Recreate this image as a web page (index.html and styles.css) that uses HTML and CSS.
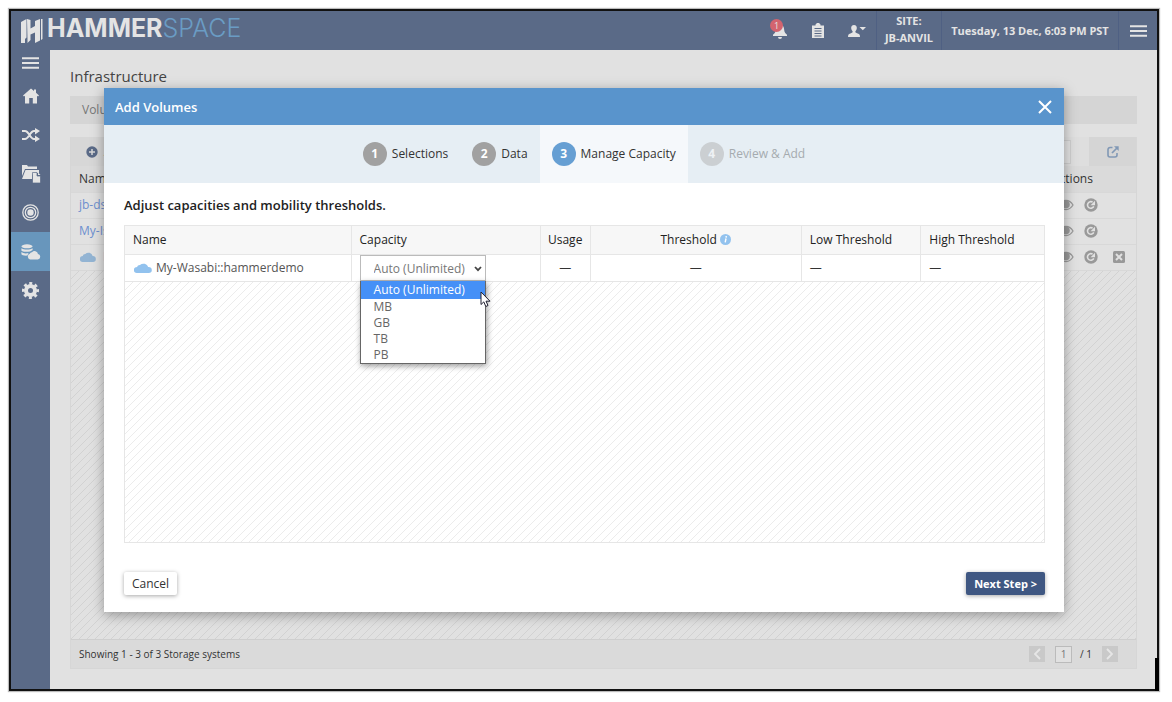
FILE: index.html
```html
<!DOCTYPE html>
<html lang="en">
<head>
<meta charset="utf-8">
<title>Hammerspace - Add Volumes</title>
<link rel="stylesheet" href="styles.css">
</head>
<body>
<svg class="defs" aria-hidden="true">
  <symbol id="cloud" viewBox="0 0 16 10"><path d="M3 10a3 3 0 0 1-.3-6A2.6 2.6 0 0 1 5.300 2 4.300 4.300 0 0 1 12.600 4 3 3 0 0 1 13 10z"/></symbol>
  <symbol id="eye" viewBox="0 0 16 12"><path d="M1 6C4.500 0 11.500 0 15 6C11.500 12 4.500 12 1 6z" fill="none" stroke="currentColor" stroke-width="1.300"/><circle cx="8" cy="5.500" r="3.800"/></symbol>
  <symbol id="refresh" viewBox="0 0 14 14"><circle cx="7" cy="7" r="6.700"/><path d="M9.800 8.400A3.300 3.300 0 1 1 8.600 4.200" fill="none" stroke="#e1e1e1" stroke-width="1.600"/><path d="M11 2.800v4.400H6.600z" fill="#e1e1e1"/></symbol>
  <symbol id="menu" viewBox="0 0 17 12"><path d="M0 1.200h17M0 6h17M0 10.800h17" stroke="currentColor" stroke-width="2"/></symbol>
</svg>
<div class="frame">
  <header class="topbar">
    <a class="brand" href="#">
      <svg class="brand-mark" viewBox="0 0 22 26" aria-hidden="true"><path d="M0 4L5.500 1v18.500L4 21v4H0zM6 1l3.500 1v8.500L14 8V3l5-2v21.500l-5 2.500V14.500l-4.500 2V22L6.500 25v-4zM20 1h1.500v20L20 22z"/></svg>
      <span class="brand-strong">HAMMER</span><span class="brand-light">SPACE</span>
    </a>
    <div class="tools">
      <button class="tool bell" aria-label="Notifications">
        <svg width="16" height="16" viewBox="0 0 16 16"><path d="M8 1.500C11 1.500 12 4 12.200 7c.1 2 1.300 3.500 2.800 4.800V13H1v-1.200C2.500 10.500 3.700 9 3.800 7 4 4 5 1.500 8 1.500zM6 14h4a2 2 0 0 1-4 0z"/></svg>
        <span class="badge">1</span>
      </button>
      <button class="tool" aria-label="Tasks">
        <svg width="14" height="16" viewBox="0 0 14 16"><path d="M1 2.500h3.500V1.500L6 0h2l1.500 1.500v1H13V15H1z"/><path d="M3.500 5.500h7M3.500 8h7M3.500 10.500h7M3.500 13h7" stroke="#5a6a87"/></svg>
      </button>
      <button class="tool" aria-label="Account">
        <svg width="18" height="14" viewBox="0 0 18 14"><path d="M6 1c2 0 3 1.400 2.800 3.300C8.700 5.800 8 6.600 7.400 7.300c-.2 1 .2 1.500 1.600 2 2 .6 3 1 3 3.700H0c0-2.700 1-3.100 3-3.700 1.400-.5 1.800-1 1.600-2C4 6.600 3.300 5.800 3.200 4.300 3 2.400 4 1 6 1zM11.500 3H18l-3.200 3.300z"/></svg>
      </button>
    </div>
    <div class="site">SITE:<br>JB-ANVIL</div>
    <div class="clock">Tuesday, 13 Dec, 6:03 PM PST</div>
    <button class="top-menu" aria-label="Menu"><svg width="17" height="12"><use href="#menu"/></svg></button>
  </header>
  <div class="body">
    <nav class="sidebar">
      <button class="nav-toggle" aria-label="Toggle navigation"><svg width="17" height="12"><use href="#menu"/></svg></button>
      <a class="nav-item" href="#" aria-label="Home"><svg width="16" height="16" viewBox="0 0 16 16"><path d="M8 .5l3 2.500V1.500h2V4.800L16 7.500l-1 1-1-.8V15.500h-4.200V10H6.200v5.500H2V7.700l-1 .8-1-1z"/></svg></a>
      <a class="nav-item" href="#" aria-label="Mobility"><svg width="18" height="14" viewBox="0 0 18 14"><path d="M0 3h3c4 0 5 8 9 8h2M0 11h3c4 0 5-8 9-8h2" fill="none" stroke="currentColor" stroke-width="2"/><path d="M13 0l5 3-5 3.400zM13 7.600l5 3.400-5 3z"/></svg></a>
      <a class="nav-item" href="#" aria-label="Files"><svg width="20" height="20" viewBox="0 0 20 20"><path d="M1 1h5l1 1.500h9V5H4L1 12z"/><path d="M4.500 6H18v3h-5l-2 2v4H1z"/><path d="M11.500 8.500H16V12h3.500v7h-8z" stroke="#5a6a87" stroke-width=".7"/><path d="M17 8.500l2.500 2.500H17z"/></svg></a>
      <a class="nav-item" href="#" aria-label="Objectives"><svg width="17" height="17" viewBox="0 0 17 17"><g fill="none" stroke="currentColor" stroke-width="1.300"><circle cx="8.500" cy="8.500" r="7.700"/><circle cx="8.500" cy="8.500" r="5.200"/></g><circle cx="8.500" cy="8.500" r="3.200"/></svg></a>
      <a class="nav-item nav-active" href="#" aria-label="Infrastructure"><svg width="20" height="16" viewBox="0 0 20 16"><ellipse cx="6" cy="2.300" rx="5.600" ry="2"/><path d="M.4 4.200c2 1.800 9.200 1.800 11.200 0V6L9 7.400C5 8.200 1 7.600.4 6.400zM.4 8.100C2 9.500 5 9.700 7.500 9.100L6.500 11.600C3 11.800.8 11.200.4 10.300z"/><path d="M9 15.500a3 3 0 0 1-.2-5.700A2.200 2.200 0 0 1 11 8.200 3.500 3.500 0 0 1 17 10 2.800 2.800 0 0 1 17 15.500z"/></svg></a>
      <a class="nav-item" href="#" aria-label="Settings"><svg width="17" height="17" viewBox="0 0 17 17"><circle cx="8.500" cy="8.500" r="4.500" fill="none" stroke="currentColor" stroke-width="4"/><circle cx="8.500" cy="8.500" r="7.200" fill="none" stroke="currentColor" stroke-width="2.600" stroke-dasharray="3 2.655" stroke-dashoffset="1.500"/></svg></a>
    </nav>
    <main class="content">
      <h1 class="page-title">Infrastructure</h1>
      <div class="tabs">Volu</div>
      <section class="panel">
        <div class="toolbar">
          <button class="add"><svg width="12" height="12" viewBox="0 0 12 12"><circle cx="6" cy="6" r="5.700"/><path d="M6 3v6M3 6h6" stroke="#d7d7d7" stroke-width="1.500"/></svg>Add</button>
          <input class="search" type="text" aria-label="Search">
          <button class="export" aria-label="Export"><svg width="12" height="12" viewBox="0 0 12 12"><path d="M5.500 1.500H3a2 2 0 0 0-2 2V9a2 2 0 0 0 2 2h5a2 2 0 0 0 2-2V7" fill="none" stroke="currentColor" stroke-width="1.600"/><path d="M5 7l5-5" stroke="currentColor" stroke-width="1.700"/><path d="M7 .3h4.700V5z"/></svg></button>
        </div>
        <table class="systems">
          <thead><tr><th>Name</th><th class="actions-col">Actions</th></tr></thead>
          <tbody>
            <tr><td><a href="#">jb-ds</a></td><td><div class="actions"><svg width="16" height="12"><use href="#eye"/></svg><svg width="14" height="14"><use href="#refresh"/></svg></div></td></tr>
            <tr><td><a href="#">My-Is</a></td><td><div class="actions"><svg width="16" height="12"><use href="#eye"/></svg><svg width="14" height="14"><use href="#refresh"/></svg></div></td></tr>
            <tr><td><a class="cloud-link" href="#"><svg width="16" height="10"><use href="#cloud"/></svg>My</a></td><td><div class="actions"><svg width="16" height="12"><use href="#eye"/></svg><svg width="14" height="14"><use href="#refresh"/></svg><svg class="remove" width="12" height="12" viewBox="0 0 12 12"><rect width="12" height="12" rx="1.500"/><path d="M3 3l6 6M9 3L3 9" stroke="#e1e1e1" stroke-width="2"/></svg></div></td></tr>
          </tbody>
        </table>
        <div class="panel-empty"></div>
        <footer class="pager">
          <span class="showing">Showing 1 - 3 of 3 Storage systems</span>
          <button class="page-btn" aria-label="Previous page"><svg width="8" height="12" viewBox="0 0 8 12"><path d="M7 1L2 6l5 5" fill="none" stroke="currentColor" stroke-width="1.800"/></svg></button>
          <input class="page-no" type="text" value="1" aria-label="Page">
          <span class="page-total">/ 1</span>
          <button class="page-btn" aria-label="Next page"><svg width="8" height="12" viewBox="0 0 8 12"><path d="M1 1l5 5-5 5" fill="none" stroke="currentColor" stroke-width="1.800"/></svg></button>
        </footer>
      </section>
    </main>
  </div>
  <div class="overlay">
    <section class="dialog" role="dialog" aria-labelledby="dialog-title">
      <header class="dialog-head">
        <h2 id="dialog-title">Add Volumes</h2>
        <button class="close" aria-label="Close"><svg width="14" height="14" viewBox="0 0 14 14"><path d="M1 1l12 12M13 1L1 13" stroke="currentColor" stroke-width="2"/></svg></button>
      </header>
      <ol class="steps">
        <li class="step"><span class="num">1</span>Selections</li>
        <li class="step"><span class="num">2</span>Data</li>
        <li class="step current"><span class="num">3</span>Manage Capacity</li>
        <li class="step pending"><span class="num">4</span>Review &amp; Add</li>
      </ol>
      <div class="dialog-body">
        <h3 class="lead">Adjust capacities and mobility thresholds.</h3>
        <div class="grid">
          <table class="volumes">
            <colgroup><col class="c-name"><col class="c-capacity"><col class="c-usage"><col class="c-threshold"><col class="c-low"><col class="c-high"></colgroup>
            <thead><tr><th>Name</th><th>Capacity</th><th class="mid">Usage</th><th class="mid">Threshold <svg class="info" width="11" height="11" viewBox="0 0 11 11"><circle cx="5.500" cy="5.500" r="5.500" fill="#92c2ee"/><path d="M6 4.500L5.200 8.300" stroke="#fff" stroke-width="1.400"/><circle cx="6.200" cy="2.800" r=".9" fill="#fff"/></svg></th><th>Low Threshold</th><th>High Threshold</th></tr></thead>
            <tbody><tr>
              <td><span class="volume"><svg width="18" height="10" viewBox="0 0 16 10" preserveAspectRatio="none"><use href="#cloud"/></svg>My-Wasabi::hammerdemo</span></td>
              <td>
                <div class="picker">
                  <select class="unit" aria-label="Capacity"><option>Auto (Unlimited)</option></select>
                  <svg class="caret" width="8" height="6" viewBox="0 0 8 6"><path d="M1 1l3 3.200L7 1" fill="none" stroke="#444" stroke-width="1.800"/></svg>
                  <ul class="options" role="listbox">
                    <li class="selected" role="option">Auto (Unlimited)</li><li role="option">MB</li><li role="option">GB</li><li role="option">TB</li><li role="option">PB</li>
                  </ul>
                  <svg class="pointer" width="11" height="17" viewBox="0 0 11 17"><path d="M1 1v12.500l2.800-2.600 2 4.600 2.200-1-2-4.300H10z" fill="#fff" stroke="#223" stroke-width="1"/></svg>
                </div>
              </td>
              <td class="mid">—</td><td class="mid">—</td><td>—</td><td>—</td>
            </tr></tbody>
          </table>
          <div class="grid-empty"></div>
        </div>
        <div class="buttons">
          <button class="btn">Cancel</button>
          <button class="btn primary">Next Step &gt;</button>
        </div>
      </div>
    </section>
  </div>
</div>
</body>
</html>
```
FILE: styles.css
```css
* { box-sizing: border-box; }
body { margin: 0; background: #fff; color: #333; font: 12px/16px "Open Sans", sans-serif; }
button { border: 0; padding: 0; background: none; color: inherit; font: inherit; }
input, select { font: inherit; }
a { color: inherit; text-decoration: none; }
h1, h2, h3, ul, ol { margin: 0; padding: 0; font-weight: 400; list-style: none; }
svg { display: block; fill: currentColor; flex: none; }
table { width: 100%; border-collapse: collapse; table-layout: fixed; }
th { font-weight: 500; text-align: left; }
.defs { position: absolute; width: 0; height: 0; }

.frame { position: relative; display: flex; flex-direction: column; min-height: calc(100vh - 20px); margin: 9px 13px 11px 9px; border: 2px solid #111; box-shadow: 0 0 1px 1px #bbb; background: #e1e1e1; }
.frame::after { content: ""; position: absolute; right: -2px; bottom: -2px; width: 4px; height: 33px; background: #000; }

.topbar { display: flex; align-items: stretch; height: 39px; background: #5a6a87; color: #e4e4e4; font-weight: 700; font-size: 11px; }
.brand { display: flex; align-items: center; padding: 0 0 5px 10px; font: 25px/34px Inter, sans-serif; }
.brand-mark { width: 22px; height: 26px; margin: 5px 4px 0 0; }
.brand-strong { font-weight: 700; }
.brand-light { font-weight: 300; color: #6a9cc4; }
.tools { display: flex; align-items: center; gap: 23px; margin-left: auto; padding-right: 10px; }
.tool { position: relative; }
.badge { position: absolute; left: -2px; top: -4px; width: 13px; height: 13px; border-radius: 50%; background: #d3646f; font-size: 9px; line-height: 13px; text-align: center; font-weight: 400; }
.site, .clock, .top-menu { display: flex; align-items: center; justify-content: center; border-left: 1px solid #4f6083; }
.site { width: 65px; padding-bottom: 4px; line-height: 17px; text-align: center; }
.clock { width: 177px; }
.top-menu { width: 39px; }

.body { flex: 1; display: flex; }
.sidebar { flex: none; width: 39px; background: #5a6a87; color: #e4e4e4; }
.nav-toggle { display: flex; align-items: center; justify-content: center; width: 100%; height: 26px; }
.nav-item { display: flex; align-items: center; justify-content: center; height: 39px; }
.nav-active { background: #6896bc; }

.content { flex: 1; display: flex; flex-direction: column; padding: 16px 20px 20px; }
.page-title { font-size: 15px; line-height: 20px; font-weight: 500; color: #444; }
.tabs { margin-top: 10px; padding: 6px 12px; background: #d5d5d5; color: #777; }
.panel { flex: 1; display: flex; flex-direction: column; margin-top: 13px; border: 1px solid #d6d6d6; border-top: 0; }
.toolbar { display: flex; align-items: center; height: 29px; background: #dedede; }
.add { display: flex; align-items: center; gap: 6px; align-self: stretch; padding: 0 15px; background: #d7d7d7; }
.add svg { color: #5a6a87; }
.search { width: 180px; height: 24px; margin: 0 18px 0 auto; border: 1px solid #cfcfcf; background: #e2e2e2; }
.export { display: flex; align-items: center; justify-content: center; align-self: stretch; width: 47px; background: #d5d5d5; color: #8198b5; }
.systems th { height: 26px; padding: 0 8px; background: #dadada; }
.systems td { height: 26px; padding: 0 8px; border-top: 1px solid #d8d8d8; color: #6d8fcf; }
.systems .actions-col { width: 93px; padding-left: 9px; }
.actions { display: flex; align-items: center; gap: 10px; padding-left: 7px; color: #999; }
.remove { margin-left: 5px; }
.cloud-link { display: flex; align-items: center; gap: 7px; padding-left: 1px; }
.cloud-link svg { color: #93b4d3; }
.panel-empty, .grid-empty { flex: 1; background-size: 8px 8px; }
.panel-empty { border-top: 1px solid #d8d8d8; background-image: linear-gradient(135deg, transparent 45%, #d2d2d2 45%, #d2d2d2 55%, transparent 55%); }
.pager { display: flex; align-items: center; height: 29px; padding: 0 18px 0 8px; border-top: 1px solid #cfcfcf; background: #dadada; font-size: 10px; }
.showing { margin-right: auto; }
.page-btn { display: flex; align-items: center; justify-content: center; width: 16px; height: 16px; background: #c9c9c9; color: #e6e6e6; }
.page-no { width: 17px; height: 17px; margin: 0 8px 0 10px; padding: 0; border: 1px solid #bbb; background: #e1e1e1; color: #777; text-align: center; }
.page-total { margin-right: 10px; }

.overlay { position: absolute; inset: 0; display: flex; padding: 77px 93px; }
.dialog { flex: 1; display: flex; flex-direction: column; background: #fff; box-shadow: 0 3px 12px rgba(0, 0, 0, .35); }
.dialog-head { display: flex; align-items: center; justify-content: space-between; height: 37px; padding: 0 12px 0 11px; background: #5994cc; color: #fff; }
.dialog-head h2 { font-size: 13px; font-weight: 600; }
.steps { display: flex; justify-content: center; height: 58px; background: #e6eef4; }
.step { display: flex; align-items: center; gap: 5px; padding: 0 12px; font-weight: 500; }
.num { width: 24px; height: 24px; border-radius: 50%; background: #a1a1a1; color: #fff; line-height: 24px; text-align: center; font-weight: 700; }
.current { background: #f5f8fb; }
.current .num { background: #669fd3; }
.pending { color: #a5abaf; }
.pending .num { background: #cbcfd2; color: #eef2f5; }
.dialog-body { flex: 1; display: flex; flex-direction: column; padding: 12px 19px 17px 20px; }
.lead { font-size: 13px; line-height: 20px; font-weight: 600; color: #222; }
.grid { flex: 1; display: flex; flex-direction: column; margin-top: 10px; border: 1px solid #e6e6e6; }
.volumes th { height: 28px; padding: 0 8px; background: #f7f7f7; color: #222; }
.volumes td { height: 27px; padding: 0 8px; border-top: 1px solid #e6e6e6; }
.volumes th + th, .volumes td + td { border-left: 1px solid #e6e6e6; }
.c-name { width: 24.6%; }
.c-capacity { width: 20.6%; }
.c-usage { width: 5.4%; }
.c-threshold { width: 23%; }
.c-low { width: 13%; }
.c-high { width: 13.4%; }
.volumes .mid { padding: 0; text-align: center; }
.info { display: inline-block; vertical-align: -1px; }
.volume { display: flex; align-items: center; gap: 4px; padding-left: 1px; color: #555; }
.volume svg { color: #92c2ee; }
.picker { position: relative; width: 126px; }
.unit { display: block; width: 100%; height: 26px; padding: 3px 0 0 13px; border: 1px solid #bbb; border-radius: 0; background: #fff; color: #777; appearance: none; }
.caret { position: absolute; right: 4px; top: 11px; }
.options { position: absolute; z-index: 1; top: 26px; left: 0; width: 100%; border: 1px solid #666; border-top: 0; background: #fff; color: #666; box-shadow: 1px 2px 6px rgba(0, 0, 0, .4); }
.options li { height: 16px; padding-left: 13px; line-height: 16px; }
.options .selected { height: 18px; background: #4590f7; color: #fff; line-height: 18px; }
.pointer { position: absolute; z-index: 2; left: 120px; top: 36px; }
.grid-empty { border-top: 1px solid #e6e6e6; background-image: linear-gradient(135deg, transparent 45%, #ececec 45%, #ececec 55%, transparent 55%); }
.buttons { display: flex; justify-content: space-between; margin-top: 29px; }
.btn { height: 23px; padding: 0 8px; border-radius: 2px; background: #fff; box-shadow: 0 1px 4px rgba(0, 0, 0, .35); font-weight: 500; }
.primary { background: #3f5782; color: #fff; font-size: 11px; font-weight: 700; }
```
